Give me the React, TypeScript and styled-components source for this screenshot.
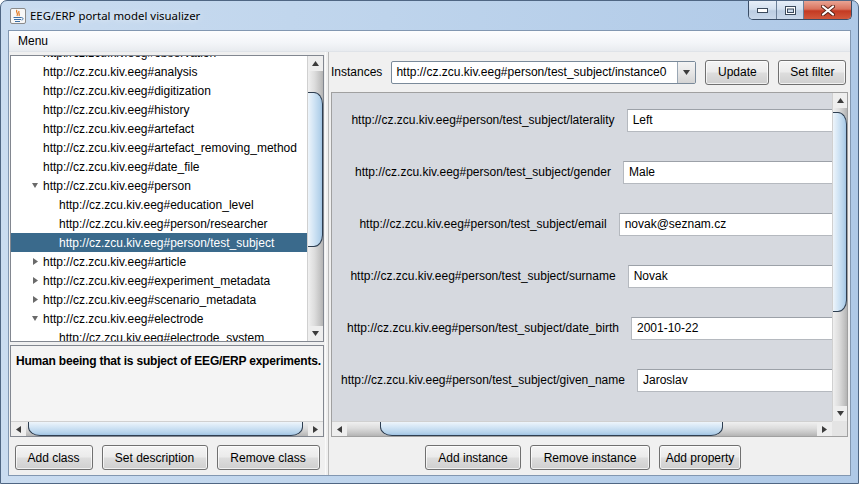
import React from 'react';
import styled, { createGlobalStyle } from 'styled-components';

const GlobalStyle = createGlobalStyle`
  html, body { margin: 0; padding: 0; background: #ffffff; }
  body { font-family: "Liberation Sans", Arial, sans-serif; font-size: 12px; color: #000; }
  * { box-sizing: border-box; }
`;

const Window = styled.div`
  width: 859px;
  height: 484px;
  display: flex;
  flex-direction: column;
  background: linear-gradient(to right, #cadcf0 0%, #bed4ec 45%, #afc9e7 100%);
  border: 1px solid #4f6683;
  border-radius: 7px 7px 0 0;
  overflow: hidden;
`;

const TitleBar = styled.div`
  height: 29px;
  display: flex;
  align-items: flex-start;
  flex-shrink: 0;
`;

const TitleLeft = styled.div`
  display: flex;
  align-items: center;
  height: 29px;
  padding-left: 9px;
  gap: 4px;
  flex: 1;
`;

const TitleText = styled.span`
  font-family: "Noto Sans", "Open Sans", sans-serif;
  font-size: 11.4px;
  color: #000;
  text-shadow: 0 0 6px rgba(255, 255, 255, 0.9);
`;

const Controls = styled.div`
  display: flex;
  height: 19px;
  margin-right: 6px;
  border: 1px solid #3a4d66;
  border-top: none;
  border-radius: 0 0 5px 5px;
  overflow: hidden;
`;

const CtlButton = styled.div<{ w: number; close?: boolean }>`
  width: ${p => p.w}px;
  display: flex;
  align-items: center;
  justify-content: center;
  background: ${p => p.close
    ? 'linear-gradient(to bottom, #e9a493 0%, #d9735e 45%, #c43a22 55%, #d2583c 100%)'
    : 'linear-gradient(to bottom, #e6eef8 0%, #d3e0ef 45%, #bccde2 55%, #c9d8ea 100%)'};
  border-right: ${p => p.close ? 'none' : '1px solid #6b7f98'};
`;

const Client = styled.div`
  flex: 1;
  margin: 0 7px 7px 7px;
  border: 1px solid #8297b1;
  background: #f0f0f0;
  display: flex;
  flex-direction: column;
  min-height: 0;
`;

const MenuBar = styled.div`
  height: 21px;
  flex-shrink: 0;
  display: flex;
  align-items: center;
  padding-left: 9px;
  background: linear-gradient(to bottom, #fdfdfe 0%, #f3f5f8 60%, #e8ebef 100%);
  border-bottom: 1px solid #dfe3e8;
`;

const Content = styled.div`
  flex: 1;
  display: flex;
  min-height: 0;
`;

const LeftPanel = styled.div`
  width: 316px;
  display: flex;
  flex-direction: column;
  padding: 3px 1px 0 1px;
`;

const Divider = styled.div`
  width: 3px;
  border-left: 1px solid #fafafa;
`;

const RightPanel = styled.div`
  flex: 1;
  display: flex;
  flex-direction: column;
  border-left: 1px solid #b9b9b9;
`;

const TreePane = styled.div`
  height: 287px;
  border: 1px solid #828790;
  display: flex;
  flex-shrink: 0;
`;

const TreeViewport = styled.div`
  flex: 1;
  overflow: hidden;
  background: #ffffff;
`;

const TreeList = styled.div`
  margin-top: -13px;
`;

const TreeRow = styled.div<{ depth: number; selected?: boolean }>`
  height: 19px;
  display: flex;
  align-items: center;
  padding-left: ${p => p.depth === 1 ? 20 : 36}px;
  white-space: nowrap;
  background: ${p => p.selected ? '#3a6a8c' : 'transparent'};
  color: ${p => p.selected ? '#ffffff' : '#000000'};
`;

const Toggle = styled.span`
  width: 12px;
  display: flex;
  align-items: center;
  padding-left: 1px;
`;

const DescPane = styled.div`
  margin-top: 3px;
  height: 92px;
  border: 1px solid #828790;
  display: flex;
  flex-direction: column;
  flex-shrink: 0;
`;

const DescText = styled.div`
  flex: 1;
  background: #f4f4f4;
  padding: 8px 0 0 5px;
  font-weight: bold;
  letter-spacing: -0.2px;
  line-height: 15px;
  white-space: nowrap;
  overflow: hidden;
`;

const ButtonRow = styled.div<{ shift?: number }>`
  display: flex;
  justify-content: center;
  gap: 9px;
  padding-top: 8px;
  padding-right: ${p => p.shift || 0}px;
`;

const Button = styled.div<{ w: number }>`
  width: ${p => p.w}px;
  height: 25px;
  display: flex;
  align-items: center;
  justify-content: center;
  border: 1px solid #707070;
  border-radius: 3px;
  background: linear-gradient(to bottom, #f4f4f4 0%, #ebebeb 48%, #dddddd 52%, #cfcfcf 100%);
  box-shadow: inset 0 0 0 1px rgba(255, 255, 255, 0.7);
  white-space: nowrap;
`;

const TopRow = styled.div`
  height: 40px;
  display: flex;
  align-items: center;
  gap: 9px;
  padding-left: 2px;
  flex-shrink: 0;
`;

const Combo = styled.div`
  width: 305px;
  height: 23px;
  display: flex;
  border: 1px solid #7a8a9a;
  border-radius: 2px;
  background: #ffffff;
`;

const ComboText = styled.div`
  flex: 1;
  display: flex;
  align-items: center;
  padding-left: 4px;
  white-space: nowrap;
  overflow: hidden;
`;

const ComboArrow = styled.div`
  width: 18px;
  display: flex;
  align-items: center;
  justify-content: center;
  border-left: 1px solid #9aa7b4;
  background: linear-gradient(to bottom, #f4f4f4 0%, #e6e6e6 50%, #d4d4d4 100%);
`;

const PropsPane = styled.div`
  height: 345px;
  margin: 0 2px 0 2px;
  border: 1px solid #a0a0a0;
  display: grid;
  grid-template-columns: 1fr 15px;
  grid-template-rows: 1fr 15px;
  flex-shrink: 0;
`;

const PropsViewport = styled.div`
  overflow: hidden;
  background: #d6d9df;
`;

const PropsInner = styled.div`
  width: 714px;
  padding-top: 1px;
`;

const PropRow = styled.div`
  height: 52px;
  display: flex;
  align-items: center;
  justify-content: center;
  gap: 12px;
`;

const PropLabel = styled.span`
  white-space: nowrap;
`;

const PropField = styled.div`
  width: 400px;
  height: 23px;
  flex-shrink: 0;
  display: flex;
  align-items: center;
  padding-left: 5px;
  background: #ffffff;
  border: 1px solid #b5b9bf;
  border-top-color: #9ca1a8;
`;

const Corner = styled.div`
  background: #e4e4e4;
`;

const VBar = styled.div<{ w: number }>`
  width: ${p => p.w}px;
  display: flex;
  flex-direction: column;
  background: linear-gradient(to right, #f0f0f0 0%, #dcdcdc 45%, #c4c4c4 80%, #b4b4b4 100%);
  border-left: 1px solid #d0d0d0;
`;

const HBar = styled.div`
  height: 15px;
  display: flex;
  background: linear-gradient(to bottom, #f0f0f0 0%, #dcdcdc 45%, #c4c4c4 80%, #b4b4b4 100%);
  border-top: 1px solid #d0d0d0;
`;

const Arrow = styled.div<{ horizontal?: boolean }>`
  ${p => p.horizontal ? 'width: 15px;' : 'height: 15px;'}
  flex-shrink: 0;
  display: flex;
  align-items: center;
  justify-content: center;
  background: #eeeeee;
`;

const Track = styled.div<{ horizontal?: boolean }>`
  flex: 1;
  display: flex;
  flex-direction: ${p => p.horizontal ? 'row' : 'column'};
`;

const VThumb = styled.div<{ start: number; size: number }>`
  margin-top: ${p => p.start}px;
  height: ${p => p.size}px;
  border: 1px solid #2e3e50;
  border-left: none;
  border-radius: 0 9px 9px 0 / 0 12px 12px 0;
  background: linear-gradient(to right, #eef5fb 0%, #cfe3f4 45%, #b3d1ea 85%, #9fc2e2 100%);
`;

const HThumb = styled.div<{ start: number; size: number }>`
  margin-left: ${p => p.start}px;
  width: ${p => p.size}px;
  border: 1px solid #2e3e50;
  border-top: none;
  border-radius: 0 0 12px 12px / 0 0 9px 9px;
  background: linear-gradient(to bottom, #eef5fb 0%, #cfe3f4 45%, #b3d1ea 85%, #9fc2e2 100%);
`;

const Tri = ({ dir }: { dir: 'up' | 'down' | 'left' | 'right' }) => {
  const pts = {
    up: '0,6 3.5,1 7,6',
    down: '0,1 3.5,6 7,1',
    left: '6,0 1,3.5 6,7',
    right: '1,0 6,3.5 1,7',
  }[dir];
  return (
    <svg width="7" height="7" viewBox="0 0 7 7">
      <polygon points={pts} fill="#3c3c3c" />
    </svg>
  );
};

const VScroll = ({ w, start, size }: { w: number; start: number; size: number }) => (
  <VBar w={w}>
    <Arrow><Tri dir="up" /></Arrow>
    <Track><VThumb start={start} size={size} /></Track>
    <Arrow><Tri dir="down" /></Arrow>
  </VBar>
);

const HScroll = ({ start, size }: { start: number; size: number }) => (
  <HBar>
    <Arrow horizontal><Tri dir="left" /></Arrow>
    <Track horizontal><HThumb start={start} size={size} /></Track>
    <Arrow horizontal><Tri dir="right" /></Arrow>
  </HBar>
);

const JavaIcon = () => (
  <svg width="16" height="16" viewBox="0 0 16 16">
    <rect x="0.5" y="0.5" width="15" height="15" rx="1.5" fill="#f7f7f7" stroke="#8a8a8a" />
    <path d="M7 2 C5 4 9 5 7 8 M9 3 C8 5 10 6 9 8" stroke="#e2761b" strokeWidth="1.2" fill="none" />
    <path d="M3.5 9.5 h8 M4 11.5 h7 M5 13.5 h5" stroke="#3a6ea5" strokeWidth="1.1" />
    <path d="M11.5 9.5 c2 0 2 2.5 0 2.5" stroke="#3a6ea5" strokeWidth="1" fill="none" />
  </svg>
);

type Node = { text: string; depth: 1 | 2; toggle?: 'open' | 'closed'; selected?: boolean };

const base = 'http://cz.zcu.kiv.eeg#';

const treeNodes: Node[] = [
  { text: base + 'observation', depth: 1 },
  { text: base + 'analysis', depth: 1 },
  { text: base + 'digitization', depth: 1 },
  { text: base + 'history', depth: 1 },
  { text: base + 'artefact', depth: 1 },
  { text: base + 'artefact_removing_method', depth: 1 },
  { text: base + 'date_file', depth: 1 },
  { text: base + 'person', depth: 1, toggle: 'open' },
  { text: base + 'education_level', depth: 2 },
  { text: base + 'person/researcher', depth: 2 },
  { text: base + 'person/test_subject', depth: 2, selected: true },
  { text: base + 'article', depth: 1, toggle: 'closed' },
  { text: base + 'experiment_metadata', depth: 1, toggle: 'closed' },
  { text: base + 'scenario_metadata', depth: 1, toggle: 'closed' },
  { text: base + 'electrode', depth: 1, toggle: 'open' },
  { text: base + 'electrode_system', depth: 2 },
];

const properties = [
  ['laterality', 'Left'],
  ['gender', 'Male'],
  ['email', 'novak@seznam.cz'],
  ['surname', 'Novak'],
  ['date_birth', '2001-10-22'],
  ['given_name', 'Jaroslav'],
];

const ToggleGlyph = ({ state }: { state: 'open' | 'closed' }) => (
  <svg width="7" height="7" viewBox="0 0 7 7">
    {state === 'open'
      ? <polygon points="0,1 6,1 3,6" fill="#6a6a6a" />
      : <polygon points="1,0 6,3.5 1,7" fill="#6a6a6a" />}
  </svg>
);

export default function App() {
  return (
    <>
      <GlobalStyle />
      <Window>
        <TitleBar>
          <TitleLeft>
            <JavaIcon />
            <TitleText>EEG/ERP portal model visualizer</TitleText>
          </TitleLeft>
          <Controls>
            <CtlButton w={28}>
              <svg width="11" height="5" viewBox="0 0 11 5">
                <rect x="0.5" y="0.5" width="10" height="4" fill="#ffffff" stroke="#3b4a5c" />
              </svg>
            </CtlButton>
            <CtlButton w={27}>
              <svg width="11" height="9" viewBox="0 0 11 9">
                <rect x="0.5" y="0.5" width="10" height="8" fill="#ffffff" stroke="#3b4a5c" />
                <rect x="2.5" y="3" width="6" height="3.5" fill="#c9d8ea" stroke="#3b4a5c" />
              </svg>
            </CtlButton>
            <CtlButton w={47} close>
              <svg width="14" height="11" viewBox="0 0 14 11">
                <path d="M2 1.5 L12 9.5 M12 1.5 L2 9.5" stroke="#5a2418" strokeWidth="4" strokeLinecap="round" />
                <path d="M2 1.5 L12 9.5 M12 1.5 L2 9.5" stroke="#ffffff" strokeWidth="2.2" strokeLinecap="round" />
              </svg>
            </CtlButton>
          </Controls>
        </TitleBar>
        <Client>
          <MenuBar>Menu</MenuBar>
          <Content>
            <LeftPanel>
              <TreePane>
                <TreeViewport>
                  <TreeList>
                    {treeNodes.map(n => (
                      <TreeRow key={n.text} depth={n.depth} selected={n.selected}>
                        <Toggle>{n.toggle && <ToggleGlyph state={n.toggle} />}</Toggle>
                        <span>{n.text}</span>
                      </TreeRow>
                    ))}
                  </TreeList>
                </TreeViewport>
                <VScroll w={16} start={21} size={155} />
              </TreePane>
              <DescPane>
                <DescText>Human beeing that is subject of EEG/ERP experiments.</DescText>
                <HScroll start={2} size={275} />
              </DescPane>
              <ButtonRow>
                <Button w={78}>Add class</Button>
                <Button w={106}>Set description</Button>
                <Button w={103}>Remove class</Button>
              </ButtonRow>
            </LeftPanel>
            <Divider />
            <RightPanel>
              <TopRow>
                <span>Instances</span>
                <Combo>
                  <ComboText>http://cz.zcu.kiv.eeg#person/test_subject/instance0</ComboText>
                  <ComboArrow><Tri dir="down" /></ComboArrow>
                </Combo>
                <Button w={64}>Update</Button>
                <Button w={68}>Set filter</Button>
              </TopRow>
              <PropsPane>
                <PropsViewport>
                  <PropsInner>
                    {properties.map(([name, value]) => (
                      <PropRow key={name}>
                        <PropLabel>http://cz.zcu.kiv.eeg#person/test_subject/{name}</PropLabel>
                        <PropField>{value}</PropField>
                      </PropRow>
                    ))}
                  </PropsInner>
                </PropsViewport>
                <VScroll w={15} start={4} size={200} />
                <HScroll start={33} size={343} />
                <Corner />
              </PropsPane>
              <ButtonRow shift={13}>
                <Button w={96}>Add instance</Button>
                <Button w={120}>Remove instance</Button>
                <Button w={82}>Add property</Button>
              </ButtonRow>
            </RightPanel>
          </Content>
        </Client>
      </Window>
    </>
  );
}
